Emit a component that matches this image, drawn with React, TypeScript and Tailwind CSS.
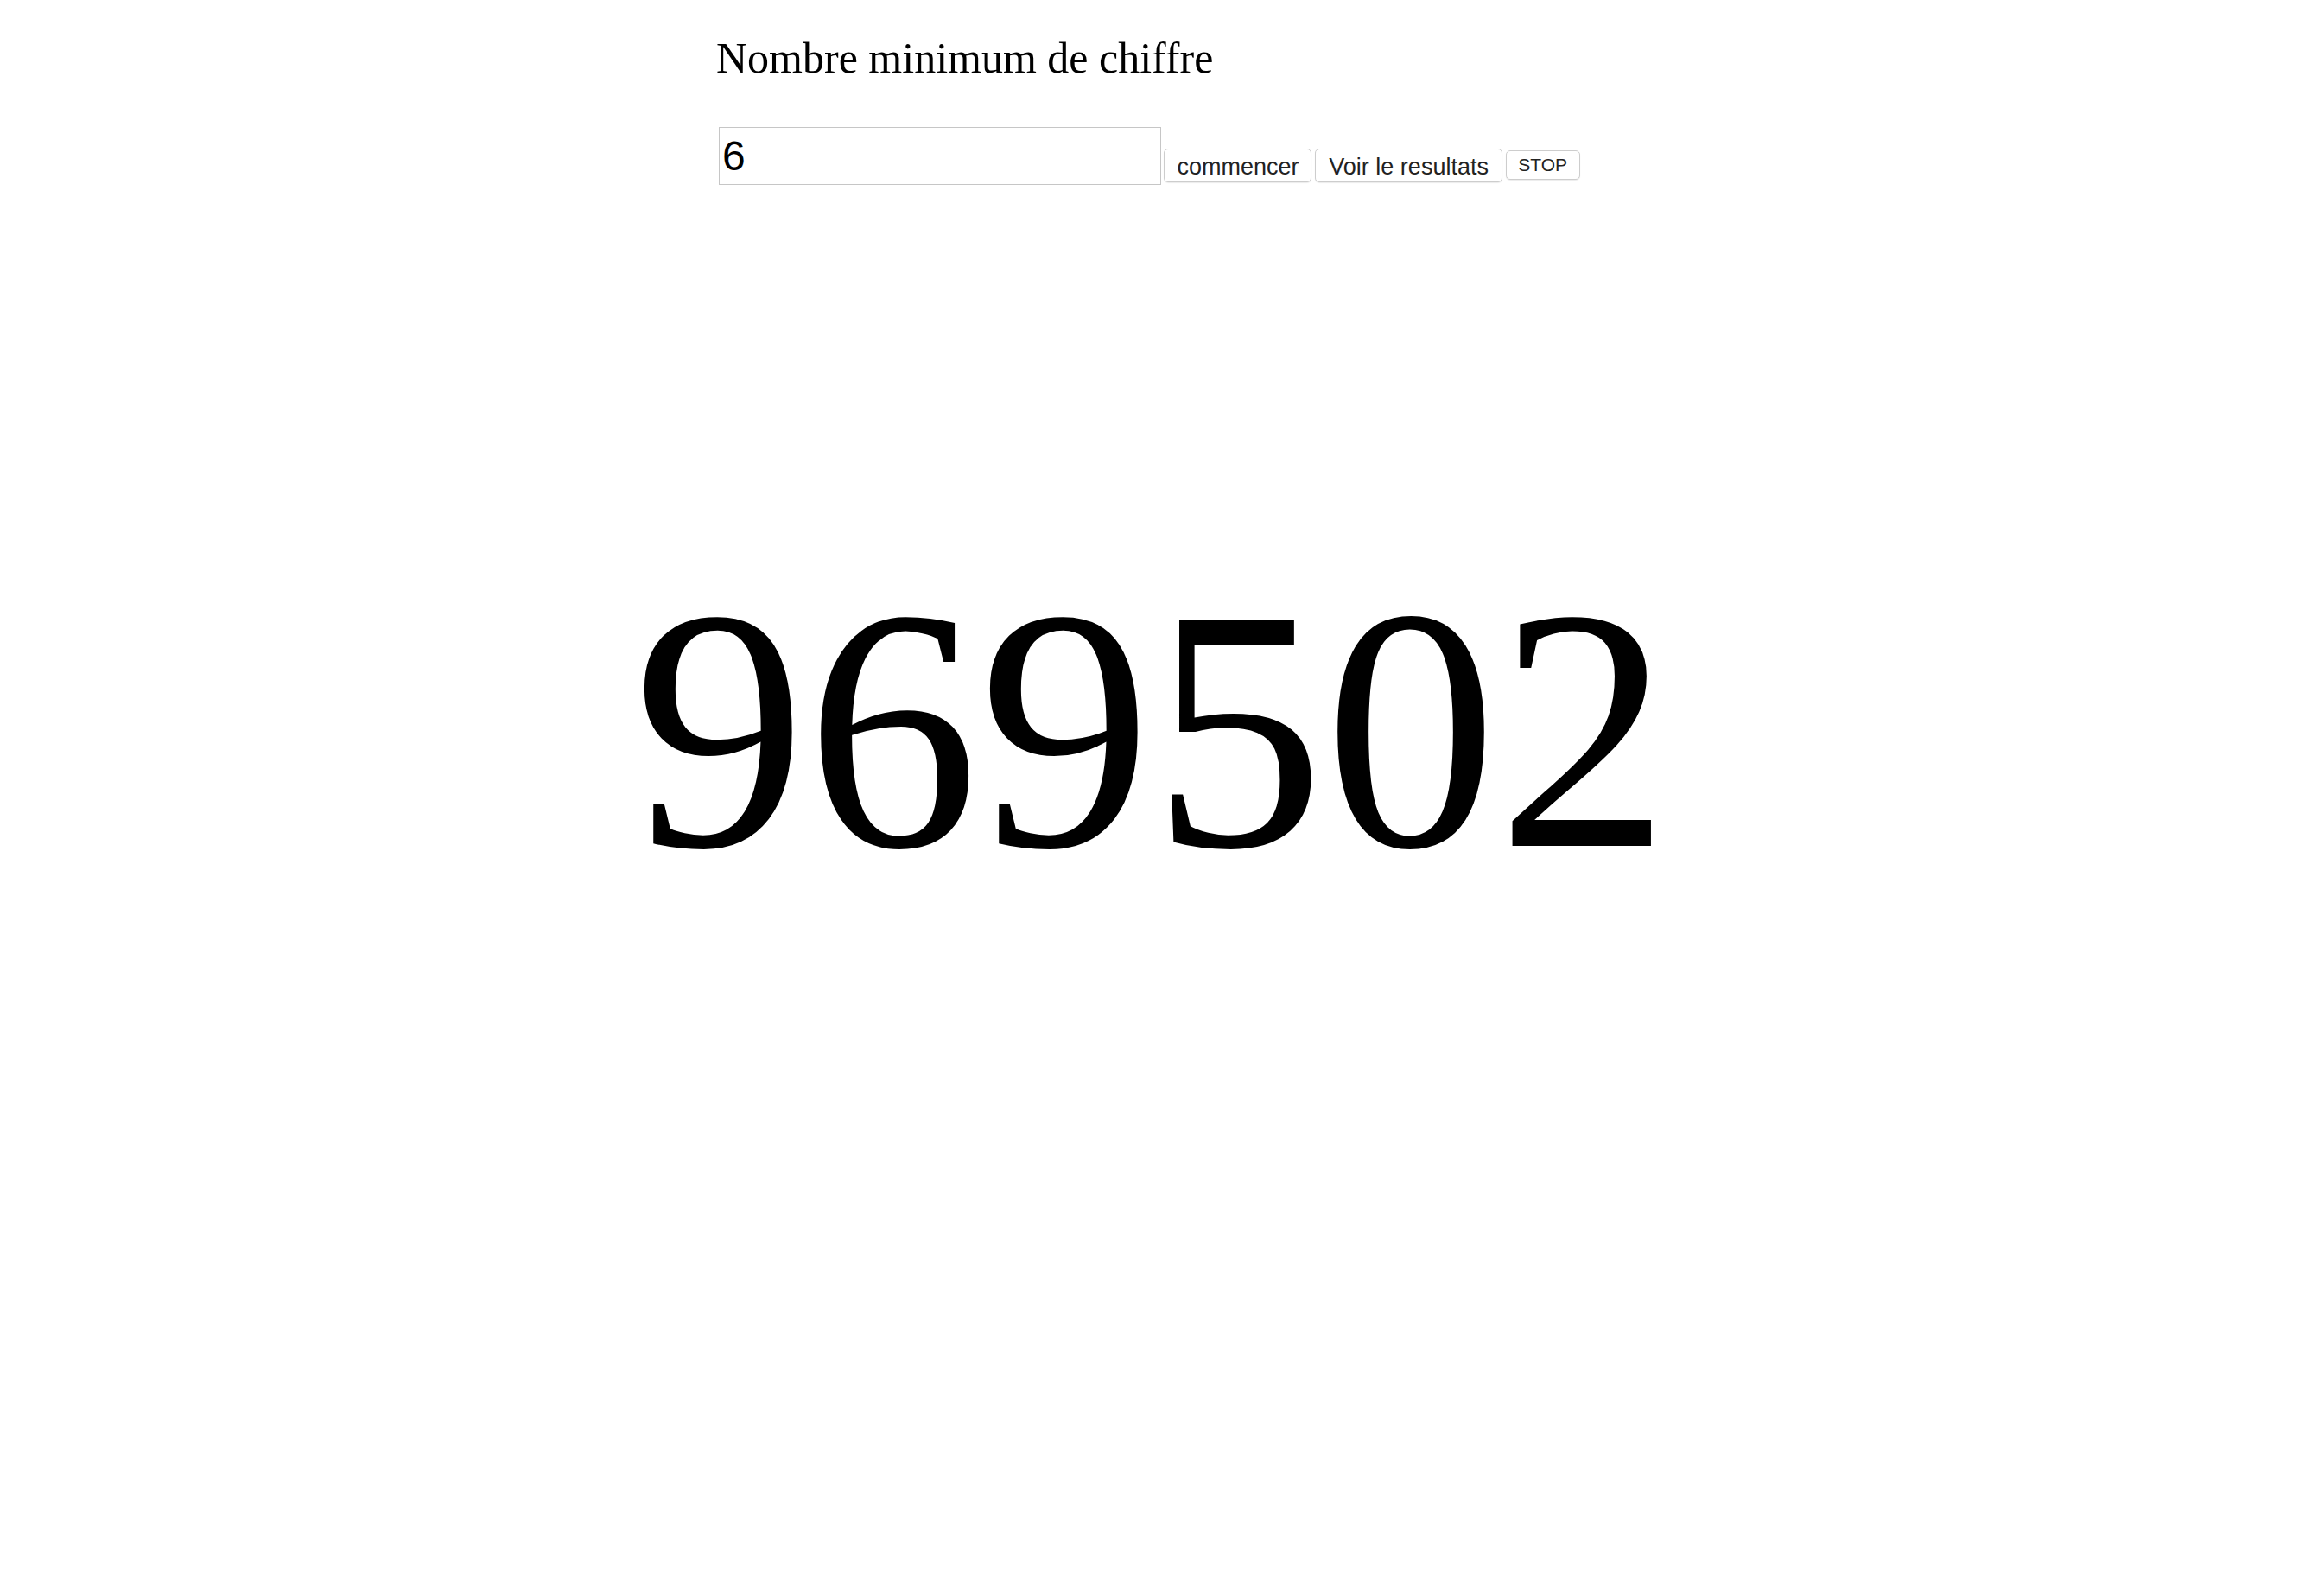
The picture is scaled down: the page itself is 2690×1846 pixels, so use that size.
import { useState } from 'react'

export default function App() {
  const [digits, setDigits] = useState('6')
  const [value] = useState('969502')

  return (
    <div className="min-h-screen w-full bg-white text-black">
      <div className="pt-[39px] pl-[829px]">
        <h2 className="text-[50px] leading-[56px] font-normal font-['Liberation_Serif',serif]">
          Nombre minimum de chiffre
        </h2>

        <div className="mt-[52px] flex items-start gap-[3.4px] pl-[3px] font-['Liberation_Sans',Arial,sans-serif]">
          <input
            type="text"
            value={digits}
            onChange={(e) => setDigits(e.target.value)}
            className="h-[67px] w-[512px] border border-[#c6c6c6] bg-white px-[3px] text-[48px] text-black outline-none"
          />
          <button className="mt-[24.5px] h-[39px] rounded-[5px] border border-[#cdcdcd] bg-white px-[14px] text-[27px] text-[#222] shadow-[0_1px_1px_rgba(0,0,0,0.08)]">
            commencer
          </button>
          <button className="mt-[24.5px] h-[39px] rounded-[5px] border border-[#cdcdcd] bg-white px-[15.5px] text-[27px] text-[#222] shadow-[0_1px_1px_rgba(0,0,0,0.08)]">
            Voir le resultats
          </button>
          <button className="mt-[27px] h-[34px] rounded-[5px] border border-[#cdcdcd] bg-white px-[13.5px] text-[21px] text-[#222] shadow-[0_1px_1px_rgba(0,0,0,0.08)]">
            STOP
          </button>
        </div>
      </div>

      <div className="mt-[431px] flex justify-center pr-[24px]">
        <div className="text-[400px] leading-none font-['Liberation_Serif',serif]">{value}</div>
      </div>
    </div>
  )
}
